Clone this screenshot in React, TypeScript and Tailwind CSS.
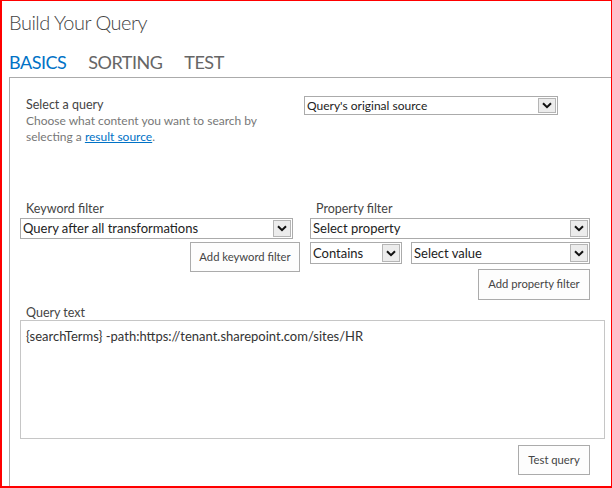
import React from 'react';

const Chevron: React.FC = () => (
  <svg width="10" height="7" viewBox="0 0 10 7" fill="none">
    <path d="M1 1.2 L5 5.2 L9 1.2" stroke="#111" strokeWidth="2" />
  </svg>
);

const SelectBox: React.FC<{ value: string; className: string; textSize?: string }> = ({
  value,
  className,
  textSize = 'text-[13px]',
}) => (
  <div className={`flex items-stretch border border-[#ababab] bg-white ${className}`}>
    <div className={`flex-1 flex items-center pl-[2px] text-[#222] ${textSize} leading-none truncate`}>
      {value}
    </div>
    <div className="w-[18px] m-[1px] flex items-center justify-center bg-[#ececec] border border-[#b5b5b5]">
      <Chevron />
    </div>
  </div>
);

const Button: React.FC<{ label: string; className: string }> = ({ label, className }) => (
  <div
    className={`flex items-center justify-center border border-[#ababab] bg-[#fdfdfd] text-[11.25px] text-[#444] whitespace-nowrap ${className}`}
  >
    {label}
  </div>
);

export default function App() {
  return (
    <div
      className="w-[612px] h-[488px] bg-white border-t border-r border-l-2 border-b-2 border-[#ff0000] flex flex-col overflow-hidden"
      style={{ fontFamily: 'Lato, "Open Sans", sans-serif' }}
    >
      <h1 className="ml-[7px] mt-[8px] text-[20px] font-light tracking-[-0.5px] leading-[27px] text-[#444]">
        Build Your Query
      </h1>
      <div className="ml-[7px] mt-[14px] flex gap-[22px] text-[18px] tracking-[-0.5px] leading-[24px] text-[#666]">
        <span className="text-[#0072c6]">BASICS</span>
        <span>SORTING</span>
        <span>TEST</span>
      </div>

      <div className="ml-[7px] mt-[3px] flex-1 border-l border-t border-[#ababab] pl-[10px] pr-[6px]">
        {/* query source */}
        <div className="flex items-start pt-[18px]">
          <div className="w-[284px] pl-[6px] pt-[1px] leading-[16px]">
            <div className="text-[12.5px] text-[#444]">Select a query</div>
            <div className="text-[12px] text-[#777]">
              Choose what content you want to search by
              <br />
              selecting a <span className="text-[#0072c6] underline">result source</span>.
            </div>
          </div>
          <SelectBox value="Query's original source" className="w-[254px] h-[19px]" textSize="text-[12px]" />
        </div>

        {/* filters */}
        <div className="grid grid-cols-[280px_280px] gap-x-[10px] mt-[56px]">
          <div className="flex flex-col">
            <div className="pl-[6px] text-[12.5px] leading-[16px] text-[#444]">Keyword filter</div>
            <SelectBox value="Query after all transformations" className="w-[273px] h-[21px] mt-[1px]" />
            <Button label="Add keyword filter" className="self-end w-[110px] h-[30px] mt-[3px]" />
          </div>
          <div className="flex flex-col">
            <div className="pl-[6px] text-[12.5px] leading-[16px] text-[#444]">Property filter</div>
            <SelectBox value="Select property" className="w-[280px] h-[21px] mt-[1px]" />
            <div className="flex gap-[9px] mt-[3px]">
              <SelectBox value="Contains" className="w-[92px] h-[22px]" />
              <SelectBox value="Select value" className="w-[179px] h-[22px]" />
            </div>
            <Button label="Add property filter" className="self-end w-[112px] h-[31px] mt-[5px]" />
          </div>
        </div>

        {/* query text */}
        <div className="mt-[5px] pl-[6px] text-[12.5px] leading-[16px] text-[#444]">Query text</div>
        <div className="mt-[-1px] w-[585px] h-[119px] border border-[#c6c6c6] px-[5px] py-[7px] text-[13px] leading-[16px] text-[#333]">
          {'{searchTerms} -path:https://tenant.sharepoint.com/sites/HR'}
        </div>
        <div className="flex w-[570px] justify-end mt-[6px]">
          <Button label="Test query" className="w-[72px] h-[30px]" />
        </div>
      </div>
    </div>
  );
}
